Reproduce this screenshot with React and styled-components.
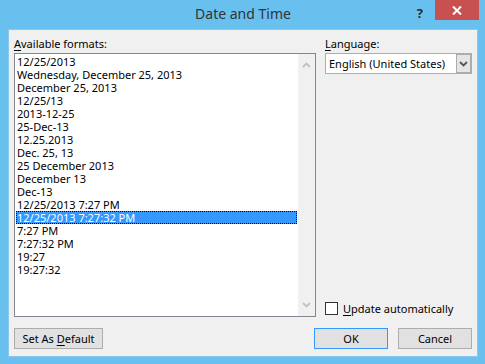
import React from "react";
import styled, { createGlobalStyle } from "styled-components";

const Global = createGlobalStyle`
  html, body { margin: 0; padding: 0; }
  body { width: 485px; height: 364px; overflow: hidden; font-family: "Noto Sans", "DejaVu Sans", sans-serif; }
`;

const Frame = styled.div`
  width: 485px;
  height: 364px;
  box-sizing: border-box;
  background: #68c0ee;
  display: flex;
  flex-direction: column;
  padding: 0 7px 7px 8px;
`;

const TitleBar = styled.div`
  height: 29px;
  flex: none;
  position: relative;
  display: flex;
  align-items: center;
  justify-content: center;
`;

const Title = styled.div`
  font-size: 14px;
  color: #333;
  margin-top: -2px;
`;

const HelpGlyph = styled.div`
  position: absolute;
  right: 55px;
  top: 4px;
  font-size: 13px;
  font-weight: bold;
  color: #2b2b2b;
`;

const CloseButton = styled.div`
  position: absolute;
  right: -1px;
  top: 0;
  width: 44px;
  height: 20px;
  background: #c75050;
  display: flex;
  align-items: center;
  justify-content: center;
`;

const Client = styled.div`
  flex: 1;
  background: #f0f0f0;
  border: 1px solid #8fc6ea;
  padding: 6px 5px 7px 5px;
  display: flex;
  flex-direction: column;
  font-size: 11px;
  color: #000;
`;

const Main = styled.div`
  display: grid;
  grid-template-columns: 302px 147px;
  column-gap: 9px;
`;

const Column = styled.div`
  display: flex;
  flex-direction: column;
`;

const Label = styled.div`
  height: 16px;
  line-height: 16px;
  margin-bottom: 1px;
  white-space: nowrap;
`;

const U = styled.span`
  text-decoration: underline;
  text-underline-offset: 2px;
`;

const ListBox = styled.div`
  height: 264px;
  box-sizing: border-box;
  border: 1px solid #828790;
  background: #fff;
  display: flex;
`;

const Items = styled.div`
  flex: 1;
  padding: 1px 1px 0 1px;
  display: flex;
  flex-direction: column;
`;

const Item = styled.div`
  position: relative;
  height: 13px;
  line-height: 13px;
  padding-left: 1px;
  white-space: nowrap;
  color: ${(p) => (p.$selected ? "#fff" : "#000")};
  background: ${(p) => (p.$selected ? "#3399ff" : "transparent")};
  ${(p) =>
    p.$selected
      ? `&::after {
           content: "";
           position: absolute;
           inset: 0;
           border: 1px dotted #000;
           background: transparent;
         }`
      : ""}
`;

const ScrollBar = styled.div`
  width: 17px;
  background: #f0f0f0;
  display: flex;
  flex-direction: column;
  justify-content: space-between;
  align-items: center;
  padding: 8px 0 8px 0;
`;

const Combo = styled.div`
  height: 21px;
  box-sizing: border-box;
  border: 1px solid #abadb3;
  background: #fff;
  display: flex;
  align-items: stretch;
`;

const ComboText = styled.div`
  flex: 1;
  padding-left: 3px;
  line-height: 19px;
  white-space: nowrap;
`;

const DropButton = styled.div`
  width: 15px;
  box-sizing: border-box;
  background: #e5e5e5;
  border: 1px solid #acacac;
  display: flex;
  align-items: center;
  justify-content: center;
`;

const CheckRow = styled.label`
  margin-top: auto;
  margin-bottom: 2px;
  display: flex;
  align-items: center;
  gap: 5px;
  height: 14px;
`;

const CheckBox = styled.span`
  width: 13px;
  height: 13px;
  box-sizing: border-box;
  border: 1px solid #333;
  background: #fff;
`;

const ButtonRow = styled.div`
  margin-top: 11px;
  display: flex;
  gap: 10px;
`;

const Button = styled.div`
  width: ${(p) => p.$w}px;
  height: 21px;
  box-sizing: border-box;
  border: 1px solid ${(p) => (p.$default ? "#3399ff" : "#adadad")};
  background: #e1e1e1;
  display: flex;
  align-items: center;
  justify-content: center;
  white-space: nowrap;
  ${(p) => (p.$push ? "margin-left: auto;" : "")}
`;

const Chevron = ({ up, color = "#c2c2c2", w = 7 }) => (
  <svg width={w + 2} height="6" viewBox="0 0 9 6">
    <path
      d={up ? "M1 5 L4.5 1.5 L8 5" : "M1 1 L4.5 4.5 L8 1"}
      fill="none"
      stroke={color}
      strokeWidth="1.8"
    />
  </svg>
);

const formats = [
  "12/25/2013",
  "Wednesday, December 25, 2013",
  "December 25, 2013",
  "12/25/13",
  "2013-12-25",
  "25-Dec-13",
  "12.25.2013",
  "Dec. 25, 13",
  "25 December 2013",
  "December 13",
  "Dec-13",
  "12/25/2013 7:27 PM",
  "12/25/2013 7:27:32 PM",
  "7:27 PM",
  "7:27:32 PM",
  "19:27",
  "19:27:32",
];

export default function App() {
  return (
    <>
      <Global />
      <Frame>
        <TitleBar>
          <Title>Date and Time</Title>
          <HelpGlyph>?</HelpGlyph>
          <CloseButton>
            <svg width="10" height="9" viewBox="0 0 10 9">
              <path d="M1 0.5 L9 8.5 M9 0.5 L1 8.5" stroke="#fff" strokeWidth="2" />
            </svg>
          </CloseButton>
        </TitleBar>
        <Client>
          <Main>
            <Column>
              <Label>
                <U>A</U>vailable formats:
              </Label>
              <ListBox>
                <Items>
                  {formats.map((f, i) => (
                    <Item key={f} $selected={i === 12}>
                      {f}
                    </Item>
                  ))}
                </Items>
                <ScrollBar>
                  <Chevron up />
                  <Chevron />
                </ScrollBar>
              </ListBox>
            </Column>
            <Column>
              <Label>
                <U>L</U>anguage:
              </Label>
              <Combo>
                <ComboText>English (United States)</ComboText>
                <DropButton>
                  <Chevron color="#555" />
                </DropButton>
              </Combo>
              <CheckRow>
                <CheckBox />
                <span>
                  <U>U</U>pdate automatically
                </span>
              </CheckRow>
            </Column>
          </Main>
          <ButtonRow>
            <Button $w={89}>
              Set As&nbsp;<U>D</U>efault
            </Button>
            <Button $w={74} $default $push>
              OK
            </Button>
            <Button $w={74}>Cancel</Button>
          </ButtonRow>
        </Client>
      </Frame>
    </>
  );
}
